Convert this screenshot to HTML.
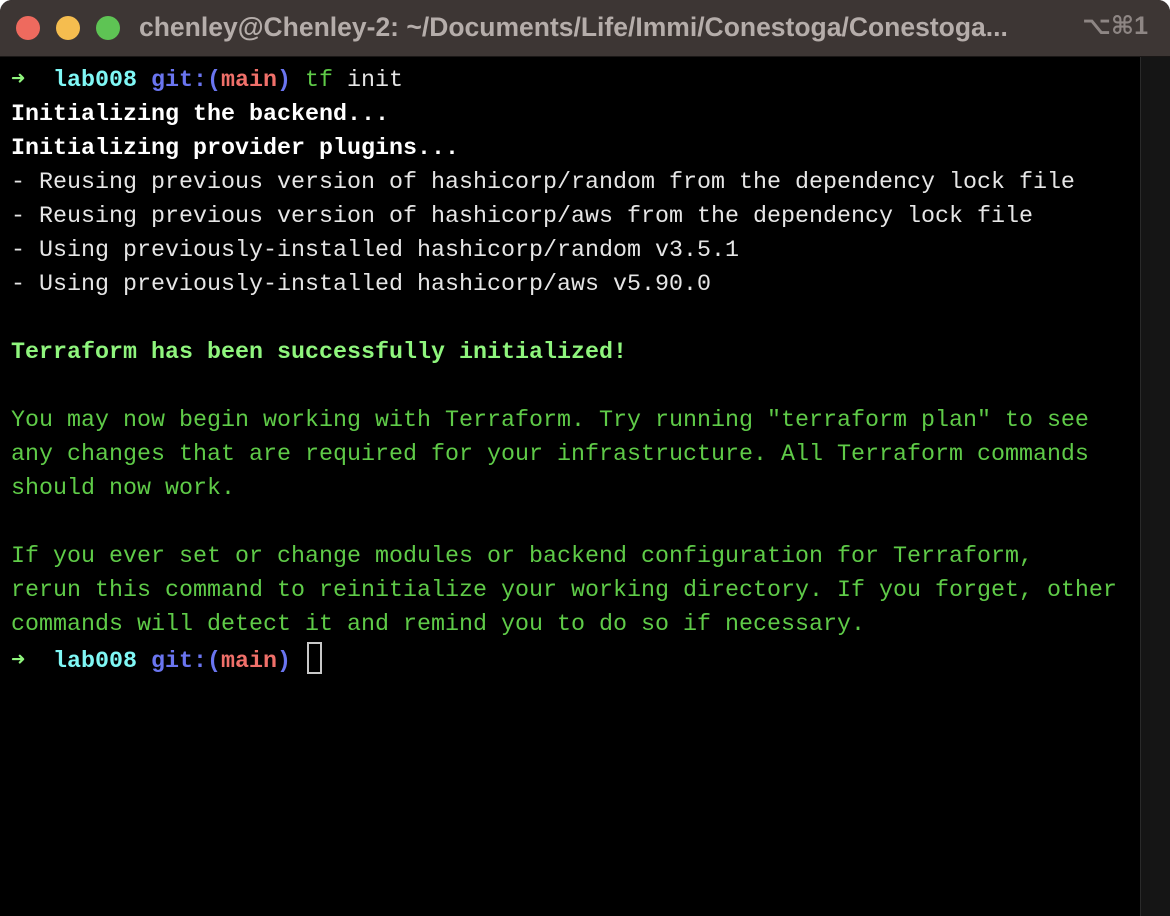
<!DOCTYPE html>
<html><head><meta charset="utf-8"><style>
html,body{margin:0;padding:0;background:#fff;width:1170px;height:916px;overflow:hidden}
.win{position:absolute;left:0;top:0;width:1170px;height:916px;background:#000;border-radius:12px 12px 0 0;overflow:hidden}
.title{position:absolute;left:0;top:0;width:1170px;height:56px;background:#3d3634;border-bottom:1px solid #1a1716}
.dot{position:absolute;top:16px;width:24px;height:24px;border-radius:50%}
.tt{position:absolute;left:139px;top:12px;font:bold 26.5px "Liberation Sans",sans-serif;color:#b5adaa;white-space:nowrap}
.kb{position:absolute;right:22px;top:11px;font:bold 25px "Liberation Sans","DejaVu Sans",sans-serif;color:#8e8684}
.sb{position:absolute;left:1140px;top:57px;width:30px;height:859px;background:#151515;border-left:1px solid #2a2a2a}
pre{position:absolute;left:11px;top:64px;margin:0;font:23.33px/34px "Liberation Mono",monospace;color:#fff;white-space:pre}
.b{font-weight:bold}.w{color:#fff}.g{color:#5fcb48}.G{color:#8ff57d;font-weight:bold}.a{color:#8ff57d;font-weight:bold}
.c{color:#7ff7f5;font-weight:bold}.bl{color:#6a75f0;font-weight:bold}.r{color:#f0706a;font-weight:bold}.gr{color:#5fcb48}.d{color:#e6e6e6}
.cur{display:inline-block;width:11px;height:28px;border:2px solid #c8c8c8;vertical-align:-7px;margin-left:2px}
</style></head><body><div class="win">
<div class="title">
<div class="dot" style="left:16px;background:#ee6a5e"></div>
<div class="dot" style="left:56px;background:#f5bd4f"></div>
<div class="dot" style="left:96px;background:#5ec454"></div>
<div class="tt">chenley@Chenley-2: ~/Documents/Life/Immi/Conestoga/Conestoga...</div>
<div class="kb">⌥⌘1</div>
</div>
<div class="sb"></div>
<pre><span class="a">➜</span>  <span class="c">lab008</span> <span class="bl">git:(</span><span class="r">main</span><span class="bl">)</span> <span class="gr">tf</span><span class="d"> init</span>
<span class="b">Initializing the backend...</span>
<span class="b">Initializing provider plugins...</span>
<span class="d">- Reusing previous version of hashicorp/random from the dependency lock file
- Reusing previous version of hashicorp/aws from the dependency lock file
- Using previously-installed hashicorp/random v3.5.1
- Using previously-installed hashicorp/aws v5.90.0</span>

<span class="G">Terraform has been successfully initialized!</span>

<span class="g">You may now begin working with Terraform. Try running "terraform plan" to see
any changes that are required for your infrastructure. All Terraform commands
should now work.

If you ever set or change modules or backend configuration for Terraform,
rerun this command to reinitialize your working directory. If you forget, other
commands will detect it and remind you to do so if necessary.</span>
<span class="a">➜</span>  <span class="c">lab008</span> <span class="bl">git:(</span><span class="r">main</span><span class="bl">)</span> <span class="cur"></span></pre>
</div></body></html>
